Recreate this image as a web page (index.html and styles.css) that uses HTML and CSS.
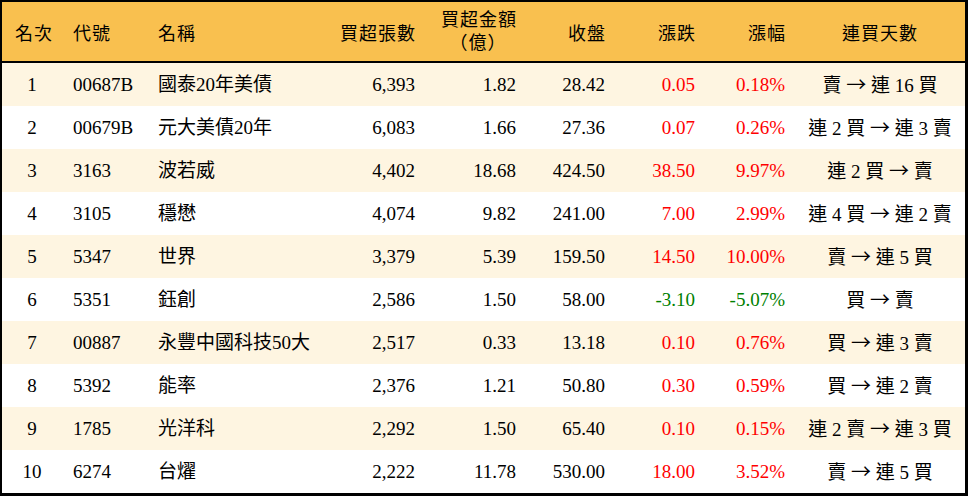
FILE: index.html
```html
<!DOCTYPE html>
<html lang="zh-Hant">
<head>
<meta charset="utf-8">
<link rel="stylesheet" href="styles.css">
</head>
<body>
<div class="wrap">
<table class="board">
<colgroup>
<col class="c1"><col class="c2"><col class="c3"><col class="c4"><col class="c5"><col class="c6"><col class="c7"><col class="c8"><col class="c9">
</colgroup>
<thead>
<tr>
<th class="ctr sp">名次</th>
<th class="lft">代號</th>
<th class="lft nm">名稱</th>
<th class="rgt">買超張數</th>
<th class="rgt two"><span class="l1">買超金額</span><span class="l2">（億）</span></th>
<th class="rgt">收盤</th>
<th class="rgt">漲跌</th>
<th class="rgt">漲幅</th>
<th class="ctr">連買天數</th>
</tr>
</thead>
<tbody>
<tr class="alt"><td class="ctr">1</td><td class="lft">00687B</td><td class="lft nm">國泰20年美債</td><td class="rgt">6,393</td><td class="rgt">1.82</td><td class="rgt">28.42</td><td class="rgt up">0.05</td><td class="rgt up">0.18%</td><td class="ctr">賣 <span class="ar">→</span> 連 16 買</td></tr>
<tr><td class="ctr">2</td><td class="lft">00679B</td><td class="lft nm">元大美債20年</td><td class="rgt">6,083</td><td class="rgt">1.66</td><td class="rgt">27.36</td><td class="rgt up">0.07</td><td class="rgt up">0.26%</td><td class="ctr">連 2 買 <span class="ar">→</span> 連 3 賣</td></tr>
<tr class="alt"><td class="ctr">3</td><td class="lft">3163</td><td class="lft nm">波若威</td><td class="rgt">4,402</td><td class="rgt">18.68</td><td class="rgt">424.50</td><td class="rgt up">38.50</td><td class="rgt up">9.97%</td><td class="ctr">連 2 買 <span class="ar">→</span> 賣</td></tr>
<tr><td class="ctr">4</td><td class="lft">3105</td><td class="lft nm">穩懋</td><td class="rgt">4,074</td><td class="rgt">9.82</td><td class="rgt">241.00</td><td class="rgt up">7.00</td><td class="rgt up">2.99%</td><td class="ctr">連 4 買 <span class="ar">→</span> 連 2 賣</td></tr>
<tr class="alt"><td class="ctr">5</td><td class="lft">5347</td><td class="lft nm">世界</td><td class="rgt">3,379</td><td class="rgt">5.39</td><td class="rgt">159.50</td><td class="rgt up">14.50</td><td class="rgt up">10.00%</td><td class="ctr">賣 <span class="ar">→</span> 連 5 買</td></tr>
<tr><td class="ctr">6</td><td class="lft">5351</td><td class="lft nm">鈺創</td><td class="rgt">2,586</td><td class="rgt">1.50</td><td class="rgt">58.00</td><td class="rgt down">-3.10</td><td class="rgt down">-5.07%</td><td class="ctr">買 <span class="ar">→</span> 賣</td></tr>
<tr class="alt"><td class="ctr">7</td><td class="lft">00887</td><td class="lft nm">永豐中國科技50大</td><td class="rgt">2,517</td><td class="rgt">0.33</td><td class="rgt">13.18</td><td class="rgt up">0.10</td><td class="rgt up">0.76%</td><td class="ctr">買 <span class="ar">→</span> 連 3 賣</td></tr>
<tr><td class="ctr">8</td><td class="lft">5392</td><td class="lft nm">能率</td><td class="rgt">2,376</td><td class="rgt">1.21</td><td class="rgt">50.80</td><td class="rgt up">0.30</td><td class="rgt up">0.59%</td><td class="ctr">買 <span class="ar">→</span> 連 2 賣</td></tr>
<tr class="alt"><td class="ctr">9</td><td class="lft">1785</td><td class="lft nm">光洋科</td><td class="rgt">2,292</td><td class="rgt">1.50</td><td class="rgt">65.40</td><td class="rgt up">0.10</td><td class="rgt up">0.15%</td><td class="ctr">連 2 賣 <span class="ar">→</span> 連 3 買</td></tr>
<tr><td class="ctr">10</td><td class="lft">6274</td><td class="lft nm">台燿</td><td class="rgt">2,222</td><td class="rgt">11.78</td><td class="rgt">530.00</td><td class="rgt up">18.00</td><td class="rgt up">3.52%</td><td class="ctr">賣 <span class="ar">→</span> 連 5 買</td></tr>
</tbody>
</table>
</div>
</body>
</html>
```

FILE: styles.css
```css
html, body {
  margin: 0;
  padding: 0;
  background: #ffffff;
}
.wrap {
  width: 963px;
  height: 491px;
  border-style: solid;
  border-color: #000;
  border-width: 2px 3px 3px 2px;
  overflow: hidden;
}
.board {
  width: 963px;
  table-layout: fixed;
  border-collapse: separate;
  border-spacing: 0;
  font-family: "Liberation Serif", "Noto Sans CJK TC", serif;
  font-size: 19px;
  color: #000;
}
.c1 { width: 60px; }
.c2 { width: 86px; }
.c3 { width: 172px; }
.c4 { width: 105px; }
.c5 { width: 101px; }
.c6 { width: 89px; }
.c7 { width: 90px; }
.c8 { width: 90px; }
.c9 { width: 170px; }
.board th {
  background: #f9c04f;
  height: 59px;
  padding: 0;
  border-bottom: 2px solid #000;
  font-weight: normal;
  font-family: "Noto Sans CJK TC", sans-serif;
  font-size: 18px;
  letter-spacing: 1px;
  line-height: 20px;
  vertical-align: middle;
  white-space: nowrap;
}
.board td {
  height: 43px;
  padding: 0;
  vertical-align: middle;
  white-space: nowrap;
  line-height: 22px;
}
.alt td { background: #fef5e1; }
.ctr { text-align: center; }
.lft { text-align: left; padding-left: 11px !important; }
.lft.nm { padding-left: 10px !important; }
.rgt { text-align: right; padding-right: 10px !important; }
.board th.rgt { padding-right: 9px !important; }
.sp { letter-spacing: 4px; text-indent: 4px; }
.two .l1, .two .l2 { display: block; line-height: 23px; }
.two .l1 { margin-top: -3px; }
.two .l2 { text-align: center; padding-left: 14px; }
.ar { font-family: "Noto Sans CJK TC", sans-serif; font-size: 20px; }
.up { color: #ff0000; }
.down { color: #008000; }
```
